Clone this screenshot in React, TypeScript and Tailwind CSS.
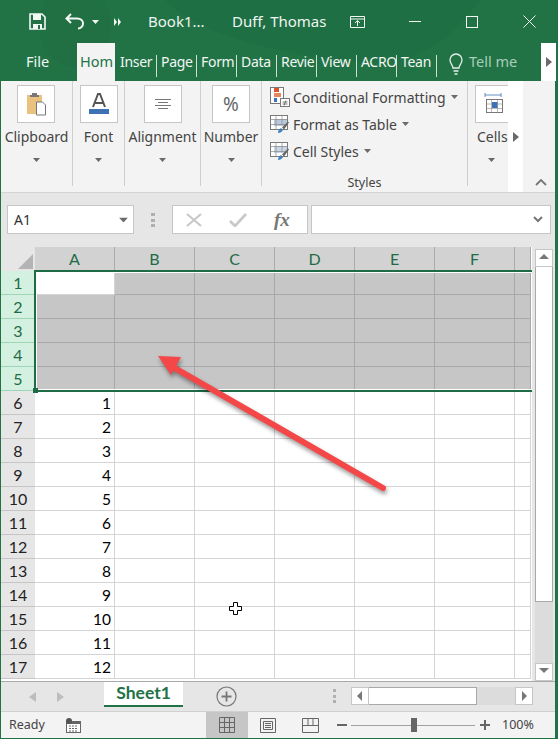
import { Fragment } from 'react';

const ui = { fontFamily: '"Noto Sans", "Open Sans", sans-serif' };
const sheet = { fontFamily: 'Lato, "Open Sans", sans-serif' };
const cols = ['A', 'B', 'C', 'D', 'E', 'F', ''];
const rows = Array.from({ length: 17 }, (_, i) => i + 1);

function Caret({ className = '' }: { className?: string }) {
  return (
    <svg width="7" height="4" viewBox="0 0 7 4" className={className}>
      <path d="M0 0h7L3.5 4z" fill="#6a6a6a" />
    </svg>
  );
}

function RibbonTab({ label, w }: { label: string; w: string }) {
  return (
    <div className={`${w} h-[22px] pl-[4px] border-r border-[#cfe0d6] whitespace-nowrap text-[14px] tracking-[-0.3px] leading-[13px] text-[#f1f6f3]`}>
      {label}
    </div>
  );
}

function RibbonGroup({ label, w, ml, icon }: { label: string; w: string; ml: string; icon: React.ReactNode }) {
  return (
    <div className={`${w} h-[105px] shrink-0 border-r border-[#cfcfcf] flex flex-col items-center`}>
      <div className={`w-[38px] h-[38px] mt-[4px] ${ml} bg-white border border-[#c6c6c6] flex items-center justify-center`}>
        {icon}
      </div>
      <div className="mt-[3px] text-[14px] leading-[22px] text-[#444] whitespace-nowrap">{label}</div>
      <Caret className="mt-[10px]" />
    </div>
  );
}

function StyleRow({ label, icon, top }: { label: string; icon: React.ReactNode; top: string }) {
  return (
    <div className={`flex items-center h-[20px] ${top}`}>
      <div className="w-[22px] ml-[8px] h-[20px] flex items-center">{icon}</div>
      <span className="ml-[1px] text-[14px] text-[#444] whitespace-nowrap">{label}</span>
      <Caret className="ml-[5px]" />
    </div>
  );
}

function TableBrush({ fill }: { fill: string }) {
  return (
    <svg width="20" height="20" viewBox="0 0 20 20">
      <rect x="0.5" y="1.5" width="17" height="14" fill="#fff" stroke="#7a7a7a" />
      <rect x="4" y="5" width="13" height="7" fill={fill} />
      <path d="M0.5 5.5h17M0.5 10.5h17M6 1.5v14M12 1.5v10" stroke="#8a8a8a" strokeWidth="0.7" />
      <path d="M8 19c0-3 2-4 3-5l2 2c-1 2-3 3-5 3z" fill="#3f7fbf" />
      <path d="M12 13.500l6-6 1 1-5 7z" fill="#666" />
    </svg>
  );
}

function ScrollButton({ dir, className = '' }: { dir: 'up' | 'down' | 'left' | 'right'; className?: string }) {
  const d = { up: 'M0 6L5 1l5 5z', down: 'M0 1h10L5 6z', left: 'M7 0v10L2 5z', right: 'M3 0v10l5-5z' }[dir];
  return (
    <div className={`w-[18px] h-[18px] bg-white border border-[#c6c6c6] flex items-center justify-center ${className}`}>
      <svg width="10" height="10" viewBox="0 0 10 10"><path d={d} fill="#777" /></svg>
    </div>
  );
}

export default function App() {
  return (
    <div style={ui} className="w-[558px] h-[739px] bg-[#217346] overflow-hidden flex flex-col relative">
      {/* title bar blotches */}
      <svg width="558" height="81" viewBox="0 0 558 81" className="absolute left-0 top-0">
        <ellipse cx="75" cy="25" rx="36" ry="42" fill="#1f6b41" opacity="0.35" />
        <path d="M165 0H480C450 40 420 70 340 60 270 52 190 30 165 0z" fill="#1e6a40" opacity="0.4" />
      </svg>

      {/* Title bar */}
      <div className="relative h-[43px] flex items-center text-[15px] text-[#eef5f1] shrink-0">
        <svg width="17" height="17" viewBox="0 0 17 17" className="ml-[29px]">
          <path d="M1 1h12l3 3v12H1z" fill="none" stroke="#f4f8f5" strokeWidth="1.600" />
          <rect x="4" y="1" width="8" height="6" fill="#f4f8f5" />
          <rect x="4" y="11" width="9" height="5" fill="#f4f8f5" />
          <rect x="9" y="12" width="2" height="4" fill="#217346" />
        </svg>
        <svg width="20" height="17" viewBox="0 0 20 17" className="ml-[19px]">
          <path d="M6 1L1.500 5.500 6 10M2 5.500h10c4 0 6 2.500 6 5s-2 5-5 5" fill="none" stroke="#f4f8f5" strokeWidth="2" />
        </svg>
        <svg width="7" height="4" viewBox="0 0 7 4" className="ml-[7px]"><path d="M0 0h7L3.500 4z" fill="#f4f8f5" /></svg>
        <svg width="7" height="8" viewBox="0 0 7 8" className="ml-[15px]"><path d="M0 0l3 4-3 4zM4 0l3 4-3 4z" fill="#f4f8f5" /></svg>
        <span className="ml-[27px] w-[84px] whitespace-nowrap">Book1...</span>
        <span className="w-[118px] whitespace-nowrap">Duff, Thomas</span>
        <svg width="15" height="12" viewBox="0 0 15 12">
          <path d="M.5.500h14v11H.5zM.5 3h14M7.500 10V5M5 7l2.500-2.500L10 7" fill="none" stroke="#f4f8f5" />
        </svg>
        <div className="ml-[44px] w-[12px] h-[1px] bg-[#f4f8f5]" />
        <div className="ml-[45px] w-[12px] h-[12px] border border-[#f4f8f5]" />
        <svg width="13" height="13" viewBox="0 0 13 13" className="ml-[45px]">
          <path d="M.5.500l12 12M12.500.500l-12 12" stroke="#f4f8f5" />
        </svg>
      </div>

      {/* Ribbon tabs */}
      <div className="relative h-[38px] flex items-end shrink-0 pl-[1px]">
        <div className="w-[76px] h-[38px] pl-[25px] pt-[8px] text-[14.5px] text-[#f1f6f3]">File</div>
        <div className="w-[38px] h-[38px] bg-[#f3f3f3] pl-[3px] pt-[8px] text-[14.5px] text-[#217346] whitespace-nowrap">Hom</div>
        <div className="flex mb-[4px] ml-[1px]">
          <RibbonTab label="Inser" w="w-[41px]" />
          <RibbonTab label="Page" w="w-[40px]" />
          <RibbonTab label="Form" w="w-[40px]" />
          <RibbonTab label="Data" w="w-[40px]" />
          <RibbonTab label="Revie" w="w-[40px]" />
          <RibbonTab label="View" w="w-[40px]" />
          <RibbonTab label="ACRO" w="w-[40px]" />
          <RibbonTab label="Tean" w="w-[40px]" />
        </div>
        <svg width="16" height="24" viewBox="0 0 16 24" className="ml-[11px] mb-[5px]">
          <path d="M5 16c0-3-3-4-3-8a6 6 0 0 1 12 0c0 4-3 5-3 8zM5.500 19h5M6.500 22h3" fill="none" stroke="#e4efe9" strokeWidth="1.300" />
        </svg>
        <div className="ml-[5px] mb-[8px] text-[14.5px] text-[#a9cdb9] whitespace-nowrap">Tell me</div>
        <div className="ml-[24px] w-[15px] h-[38px] bg-white flex items-center justify-center">
          <svg width="6" height="10" viewBox="0 0 6 10"><path d="M0 0l6 5-6 5z" fill="#6a6a6a" /></svg>
        </div>
      </div>

      {/* Ribbon */}
      <div className="relative h-[112px] ml-[1px] mr-[3px] bg-[#f3f3f3] border-b border-[#d4d4d4] flex shrink-0">
        <RibbonGroup
          label="Clipboard"
          w="w-[72px]"
          ml="ml-[-1px]"
          icon={
            <svg width="20" height="24" viewBox="0 0 20 24">
              <path d="M1 3h15v19H1z" fill="#e9c27f" />
              <path d="M6 3V1h5v2h2v2H4V3z" fill="#777" />
              <path d="M10.500 10h6l3 3v10h-9z" fill="#fff" stroke="#777" />
            </svg>
          }
        />
        <RibbonGroup
          label="Font"
          w="w-[52px]"
          ml=""
          icon={
            <svg width="20" height="22" viewBox="0 0 20 22">
              <path d="M4 14L9 1h2l5 13M6 10h8" fill="none" stroke="#555" strokeWidth="2" />
              <rect x="0" y="16" width="20" height="5" fill="#3f72b5" />
            </svg>
          }
        />
        <RibbonGroup
          label="Alignment"
          w="w-[76px]"
          ml=""
          icon={
            <svg width="16" height="11" viewBox="0 0 16 11">
              <path d="M0 .500h16M3 3.500h10M0 6.500h16M3 9.500h10" stroke="#777" />
            </svg>
          }
        />
        <RibbonGroup
          label="Number"
          w="w-[61px]"
          ml=""
          icon={<span className="text-[19px] text-[#666] leading-none">%</span>}
        />
        <div className="relative w-[206px] h-[105px] shrink-0 border-r border-[#cfcfcf]">
          <StyleRow
            top="mt-[6px]"
            label="Conditional Formatting"
            icon={
              <svg width="20" height="20" viewBox="0 0 20 20">
                <rect x=".5" y=".5" width="13" height="16" fill="#fff" stroke="#777" />
                <rect x="4" y="1" width="5" height="4" fill="#d9552b" />
                <rect x="4" y="6" width="7" height="4" fill="#e08a5e" />
                <rect x="4" y="11" width="3" height="4" fill="#3f72b5" />
                <rect x="10.500" y="11.500" width="9" height="8" fill="#fff" stroke="#777" />
                <path d="M12.500 15h5M12.500 17h5M16 13.500l-2 5" stroke="#444" strokeWidth=".7" />
              </svg>
            }
          />
          <StyleRow top="mt-[7px]" label="Format as Table" icon={<TableBrush fill="#b9c9dc" />} />
          <StyleRow top="mt-[7px]" label="Cell Styles" icon={<TableBrush fill="#c9d6e6" />} />
          <div className="mt-[13px] text-center text-[12.5px] leading-[18px] text-[#444]">Styles</div>
        </div>
        <div className="relative w-[40px] h-[105px] shrink-0 overflow-hidden flex flex-col">
          <div className="ml-[7px] w-[38px] h-[38px] mt-[4px] bg-white border border-[#c6c6c6] flex items-center justify-center">
            <svg width="20" height="22" viewBox="0 0 20 22">
              <path d="M1 2h16M1 0v4M17 0v4" stroke="#3f72b5" strokeWidth=".8" />
              <rect x="2.500" y="6.500" width="16" height="13" fill="#fff" stroke="#777" />
              <path d="M2.500 11h16M2.500 15.500h16M7.500 6.500v13M13.500 6.500v13" stroke="#999" strokeWidth=".7" />
              <rect x="8" y="9" width="5.500" height="6" fill="#3f72b5" />
            </svg>
          </div>
          <div className="mt-[3px] ml-[9px] text-[14px] leading-[22px] text-[#444] whitespace-nowrap">Cells</div>
          <Caret className="mt-[10px] ml-[20px]" />
        </div>
        <div className="w-[15px] h-[111px] bg-white shrink-0 flex items-center justify-center">
          <svg width="6" height="10" viewBox="0 0 6 10"><path d="M0 0l6 5-6 5z" fill="#6a6a6a" /></svg>
        </div>
        <svg width="12" height="7" viewBox="0 0 12 7" className="ml-[12px] mt-[98px]">
          <path d="M1 6l5-5 5 5" fill="none" stroke="#777" strokeWidth="1.800" />
        </svg>
      </div>

      {/* Formula bar */}
      <div className="h-[54px] ml-[1px] mr-[3px] bg-[#e6e6e6] flex items-start pt-[12px] shrink-0">
        <div className="ml-[6px] w-[127px] h-[29px] bg-white border border-[#c6c6c6] flex items-center justify-between pl-[6px] pr-[6px]">
          <span className="text-[14px] text-[#333]">A1</span>
          <Caret className="scale-[1.300]" />
        </div>
        <div className="ml-[17px] mt-[8px] w-[4px] h-[14px] flex flex-col justify-between">
          <div className="h-[3px] bg-[#b0b0b0]" />
          <div className="h-[3px] bg-[#b0b0b0]" />
          <div className="h-[3px] bg-[#b0b0b0]" />
        </div>
        <div className="ml-[17px] w-[136px] h-[29px] bg-white border border-[#c6c6c6] flex items-center pl-[13px]">
          <svg width="16" height="14" viewBox="0 0 16 14"><path d="M1 1l14 12M15 1L1 13" stroke="#c8c8c8" strokeWidth="2.200" /></svg>
          <svg width="18" height="14" viewBox="0 0 18 14" className="ml-[27px]"><path d="M1 8l5 5L17 1" fill="none" stroke="#c8c8c8" strokeWidth="2.600" /></svg>
          <span className="ml-[27px] font-['Liberation_Serif',serif] italic font-bold text-[19px] leading-none text-[#777]">fx</span>
        </div>
        <div className="ml-[3px] w-[240px] h-[29px] bg-white border border-[#c6c6c6] flex items-center justify-end pr-[7px]">
          <svg width="10" height="7" viewBox="0 0 10 7"><path d="M1 1l4 4 4-4" fill="none" stroke="#777" strokeWidth="2" /></svg>
        </div>
      </div>

      {/* Sheet + vertical scrollbar */}
      <div className="relative h-[434px] ml-[1px] mr-[3px] bg-[#e6e6e6] flex shrink-0">
        <div className="w-[531px] shrink-0 bg-white">
          <div className="grid grid-cols-[34px_80px_80px_80px_80px_80px_80px_16px] auto-rows-[24px]" style={sheet}>
            <div className="h-[24px] bg-[#e6e6e6] relative">
              <svg width="15" height="15" viewBox="0 0 15 15" className="absolute right-[2px] bottom-[2px]"><path d="M15 0v15H0z" fill="#b4b4b4" /></svg>
            </div>
            {cols.map((c, i) => (
              <div key={i} className="h-[24px] bg-[#d2d2d2] border-r border-[#ababab] text-center text-[16px] leading-[24px] text-[#1e6b45]">{c}</div>
            ))}
            {rows.map((r) => {
              const selected = r <= 5;
              return (
                <Fragment key={r}>
                  <div className={`border-b text-center text-[16px] leading-[24px] ${selected ? 'bg-[#d3f0e0] border-[#9fd5b7] text-[#1e6b45]' : 'bg-[#e6e6e6] border-[#c6c6c6] text-[#222]'}`}>{r}</div>
                  {cols.map((_, i) => {
                    const white = r === 1 && i === 0;
                    const grey = selected && !white;
                    return (
                      <div
                        key={i}
                        className={`border-r border-b text-right pr-[3px] text-[15.5px] leading-[24px] text-black ${grey ? 'bg-[#c6c6c6] border-[#a8a8a8]' : 'bg-white border-[#d4d4d4]'}`}
                      >
                        {i === 0 && r > 5 ? r - 5 : ''}
                      </div>
                    );
                  })}
                </Fragment>
              );
            })}
          </div>
        </div>
        <div className="ml-[3px] w-[18px] h-[432px] mt-[2px] flex flex-col">
          <ScrollButton dir="up" />
          <div className="h-[335px] bg-white border-x border-b border-[#a9a9a9]" />
          <div className="h-[61px] bg-[#dcdcdc]" />
          <ScrollButton dir="down" />
        </div>

        {/* selection outline */}
        <div className="absolute left-[33px] top-[23px] w-[498px] h-[122px] border-y-2 border-l-2 border-[#1e6b45] pointer-events-none">
          <div className="absolute inset-0 border-y border-l border-white" />
          <div className="absolute left-[-3px] bottom-[-3px] w-[5px] h-[5px] bg-[#1e6b45]" />
        </div>

        {/* red arrow */}
        <svg width="240" height="150" viewBox="0 0 240 150" className="absolute left-[150px] top-[100px] pointer-events-none drop-shadow-[1px_3px_2px_rgba(0,0,0,0.4)]">
          <path d="M232 141L22 20" stroke="#f44747" strokeWidth="6" strokeLinecap="round" />
          <path d="M7 9L30 10 20 28z" fill="#f44747" />
        </svg>

        {/* cell cursor */}
        <svg width="16" height="16" viewBox="0 0 16 16" className="absolute left-[227px] top-[354px] pointer-events-none">
          <path d="M5.500 1.500h4v4h4v4h-4v4h-4v-4h-4v-4h4z" fill="#fff" stroke="#000" />
        </svg>
      </div>

      {/* Sheet tabs */}
      <div className="h-[30px] ml-[1px] mr-[3px] bg-[#e6e6e6] border-t border-[#a9a9a9] flex items-start shrink-0">
        <svg width="7" height="10" viewBox="0 0 7 10" className="ml-[28px] mt-[10px]"><path d="M7 0v10L0 5z" fill="#bdbdbd" /></svg>
        <svg width="7" height="10" viewBox="0 0 7 10" className="ml-[21px] mt-[10px]"><path d="M0 0v10l7-5z" fill="#bdbdbd" /></svg>
        <div style={sheet} className="ml-[40px] w-[79px] h-[25px] bg-white border-b-2 border-[#217346] text-center text-[17.5px] font-bold leading-[22px] text-[#217346]">Sheet1</div>
        <svg width="21" height="21" viewBox="0 0 21 21" className="ml-[33px] mt-[4px]">
          <circle cx="10.500" cy="10.500" r="9.500" fill="none" stroke="#777" strokeWidth="1.200" />
          <path d="M10.500 5.500v10M5.500 10.500h10" stroke="#777" strokeWidth="1.800" />
        </svg>
        <div className="ml-[96px] mt-[7px] w-[3px] h-[14px] flex flex-col justify-between">
          <div className="h-[3px] bg-[#b0b0b0]" />
          <div className="h-[3px] bg-[#b0b0b0]" />
          <div className="h-[3px] bg-[#b0b0b0]" />
        </div>
        <div className="ml-[15px] mt-[5px] flex h-[18px]">
          <ScrollButton dir="left" />
          <div className="w-[108px] h-[18px] bg-white border-y border-r border-[#a9a9a9]" />
          <div className="w-[38px] h-[18px] bg-[#dcdcdc]" />
          <ScrollButton dir="right" />
        </div>
      </div>

      {/* Status bar */}
      <div className="h-[27px] ml-[1px] mr-[3px] bg-[#f3f3f3] border-t border-[#d0d0d0] flex items-center text-[#444] shrink-0">
        <span className="ml-[8px] w-[57px] text-[12.5px]">Ready</span>
        <svg width="15" height="15" viewBox="0 0 15 15">
          <rect x=".5" y="3.500" width="14" height="11" fill="#fff" stroke="#666" />
          <rect x="0" y="3" width="15" height="3" fill="#666" />
          <circle cx="3" cy="3" r="3" fill="#555" />
          <path d="M3 8h9M3 10.500h9M3 13h9" stroke="#666" strokeDasharray="2 1" />
        </svg>
        <div className="ml-[125px] w-[42px] h-[26px] bg-[#c6c6c6] flex items-center justify-center">
          <svg width="16" height="16" viewBox="0 0 16 16"><path d="M.5.500h15v15H.5zM5.500.500v15M10.500.500v15M.5 5.500h15M.5 10.500h15" fill="none" stroke="#666" /></svg>
        </div>
        <svg width="16" height="15" viewBox="0 0 16 15" className="ml-[12px]"><path d="M.5.500h15v14H.5zM3.500 3.500h9v8h-9zM5 5.500h6M5 7.500h6M5 9.500h6" fill="none" stroke="#666" /></svg>
        <svg width="17" height="15" viewBox="0 0 17 15" className="ml-[26px]"><path d="M.5.500h16v14H.5zM.5 7.500h16M6 .500v7M11 .500v7" fill="none" stroke="#666" /></svg>
        <div className="ml-[18px] w-[10px] h-[2px] bg-[#666]" />
        <div className="relative ml-[4px] w-[124px] h-[1px] bg-[#a0a0a0]">
          <div className="absolute left-[60px] top-[-7px] w-[6px] h-[14px] bg-[#666]" />
        </div>
        <svg width="10" height="10" viewBox="0 0 10 10" className="ml-[5px]"><path d="M5 0v10M0 5h10" stroke="#666" strokeWidth="2" /></svg>
        <span className="ml-[12px] text-[12.5px] whitespace-nowrap">100%</span>
      </div>
    </div>
  );
}
